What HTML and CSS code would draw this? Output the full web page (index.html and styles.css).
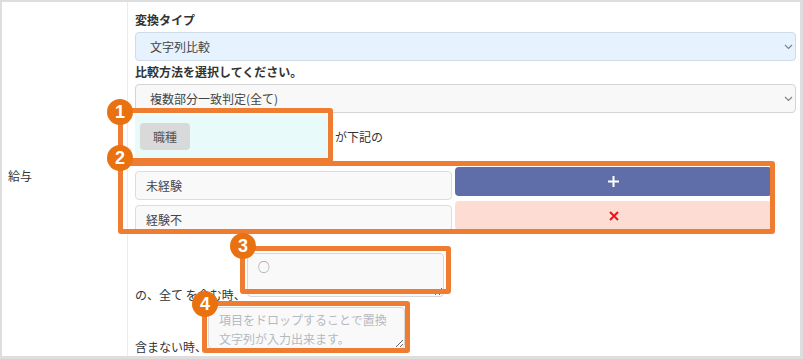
FILE: index.html
```html
<!DOCTYPE html>
<html>
<head>
    <meta charset="utf-8">
    <title>置換設定</title>
    <link rel="stylesheet" href="styles.css">
</head>
<body>
    <div class="frame">
        <div class="row">
            <div class="label">給与</div>
            <div class="field">
                <div class="heading">変換タイプ</div>
                <div class="select-wrap">
                    <select class="select select-blue"><option>文字列比較</option></select>
                    <svg class="chevron" width="9" height="6" viewBox="0 0 9 6"><polyline points="1,1 4.5,4.5 8,1" fill="none" stroke="#7d848c" stroke-width="1.2"/></svg>
                </div>
                <div class="heading">比較方法を選択してください。</div>
                <div class="select-wrap">
                    <select class="select"><option>複数部分一致判定(全て)</option></select>
                    <svg class="chevron" width="9" height="6" viewBox="0 0 9 6"><polyline points="1,1 4.5,4.5 8,1" fill="none" stroke="#7d848c" stroke-width="1.2"/></svg>
                </div>
                <div class="drop-line"><span class="drop-zone"><span class="tag">職種</span></span>が下記の</div>
                <div class="pairs">
                    <div class="col inputs">
                        <input class="word" value="未経験">
                        <input class="word" value="経験不">
                    </div>
                    <div class="col buttons">
                        <button class="btn btn-add">
                            <svg width="11" height="11" viewBox="0 0 11 11"><path d="M5.5 0v11M0 5.5h11" stroke="#fff" stroke-width="2"/></svg>
                        </button>
                        <button class="btn btn-del">
                            <svg width="10" height="10" viewBox="0 0 10 10"><path d="M1 1l8 8M9 1l-8 8" stroke="#e8141b" stroke-width="2"/></svg>
                        </button>
                    </div>
                </div>
                <div class="cond-line first">
                    <span>の、全て を含む時、</span>
                    <textarea class="repl tall">○</textarea>
                </div>
                <div class="cond-line">
                    <span>含まない時、</span>
                    <textarea class="repl" placeholder="項目をドロップすることで置換文字列が入力出来ます。"></textarea>
                </div>
            </div>
        </div>

        <!-- annotation marks -->
        <div class="mark mark-1"></div>
        <div class="mark mark-2"></div>
        <div class="mark mark-3"></div>
        <div class="mark mark-4"></div>
        <span class="badge badge-1">1</span>
        <span class="badge badge-2">2</span>
        <span class="badge badge-3">3</span>
        <span class="badge badge-4">4</span>
    </div>
</body>
</html>
```

FILE: styles.css
```css
html, body { margin: 0; padding: 0; overflow: hidden; }
body { font-family: "Noto Sans CJK JP", "Noto Sans", sans-serif; font-size: 12px; color: #333; }

.frame { position: relative; width: 803px; height: 359px; box-sizing: border-box; border: 2px solid #dedede; border-right-width: 3px; border-bottom-width: 3px; background: #fff; overflow: hidden; }
.row { display: flex; height: 100%; }
.label { width: 119px; padding: 0 0 8px 6px; border-right: 1px solid #ececec; display: flex; align-items: center; color: #333; }
.field { flex: 1; padding: 9px 4px 0 7px; }

.heading { font-weight: bold; line-height: 18px; margin-bottom: 3px; color: #333; }
.select-wrap { position: relative; margin-bottom: 2px; }
.select { -webkit-appearance: none; appearance: none; display: block; width: 100%; height: 29px; box-sizing: border-box; padding: 0 14px; border: 1px solid #d4d4d4; border-radius: 4px; background: #f8f8f8; font-family: inherit; font-size: 12px; color: #444; }
.select-blue { background: #e6f2fd; border-color: #cfdbe6; }
.chevron { position: absolute; right: 3px; top: 12px; }

.drop-line { line-height: 18px; }
.drop-zone { display: inline-block; width: 195px; height: 47px; box-sizing: border-box; padding: 8px 5px 0; margin-right: 5px; background: #e9fafa; vertical-align: baseline; }
.tag { display: inline-block; height: 27px; line-height: 27px; padding: 0 13px; border-radius: 4px; background: #d9d9d9; color: #555; }

.pairs { display: flex; gap: 3px; width: 637px; margin-top: 5px; }
.col { flex: 1; display: flex; flex-direction: column; gap: 5px; }
.inputs { padding-top: 4px; }
.word { height: 29px; box-sizing: border-box; padding: 0 10px; border: 1px solid #dcdcdc; border-radius: 4px; background: #f9f9f9; font-family: inherit; font-size: 12px; color: #444; }
.btn { height: 29px; border: none; border-radius: 4px; display: flex; align-items: center; justify-content: center; padding: 0; }
.btn-add { background: #5f6ea8; }
.btn-del { background: #fddcd4; }

.cond-line { display: flex; align-items: flex-end; margin-top: 3px; }
.cond-line.first { margin-top: 19px; }
.cond-line span { line-height: 18px; white-space: pre; }
.repl { width: 197px; height: 42px; box-sizing: border-box; margin: 0 0 7px 1px; padding: 2px 10px; border: 1px solid #d8d8d8; border-radius: 4px; background: #f9f9f9; font-family: inherit; font-size: 12px; line-height: 19px; color: #7f899b; overflow: hidden; }
.repl.tall { height: 44px; padding-top: 3px; }
.repl::placeholder { color: #b4bac1; }

.mark { position: absolute; box-sizing: border-box; border: 5px solid #ee7d31; border-radius: 3px; }
.mark-1 { left: 116px; top: 106px; width: 215px; height: 55px; }
.mark-2 { left: 116px; top: 159px; width: 657px; height: 73px; }
.mark-3 { left: 238px; top: 244px; width: 211px; height: 48px; }
.mark-4 { left: 200px; top: 299px; width: 208px; height: 52px; }

.badge { position: absolute; width: 26px; height: 26px; border-radius: 50%; background: #e9710f; color: #fff; font-family: "Liberation Sans", Arial, sans-serif; font-weight: bold; font-size: 18px; line-height: 26px; text-align: center; }
.badge-1 { left: 105px; top: 97px; }
.badge-2 { left: 105px; top: 143px; }
.badge-3 { left: 228px; top: 231px; }
.badge-4 { left: 190px; top: 289px; }
```
